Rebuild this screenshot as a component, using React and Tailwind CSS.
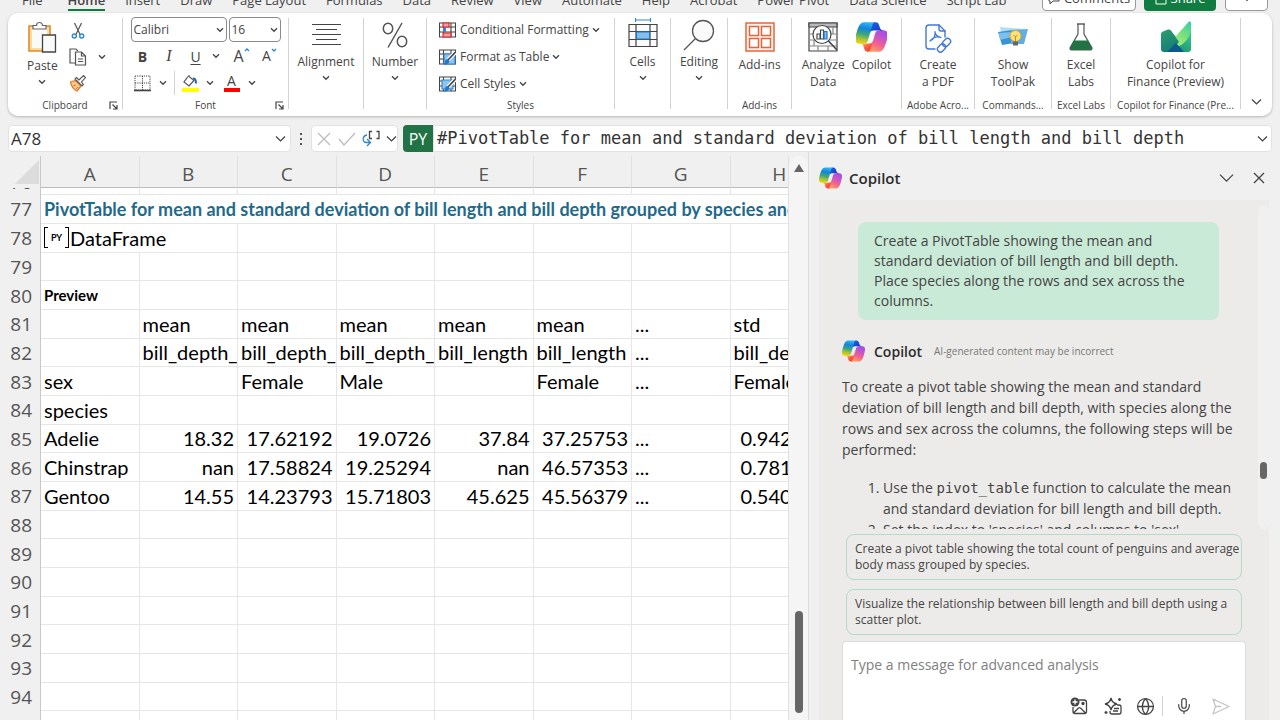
import React, { useId, useState } from 'react'
import { Mic, Globe } from 'lucide-react'

const tabs = ['Insert', 'Draw', 'Page Layout', 'Formulas', 'Data', 'Review', 'View', 'Automate', 'Help', 'Acrobat', 'Power Pivot', 'Data Science', 'Script Lab']

const columns = ['A', 'B', 'C', 'D', 'E', 'F', 'G', 'H']

const rows = [
  { id: 77, title: 'PivotTable for mean and standard deviation of bill length and bill depth grouped by species and sex' },
  { id: 78, py: 'DataFrame' },
  { id: 79 },
  { id: 80, preview: true, cells: ['Preview'] },
  { id: 81, cells: ['', 'mean', 'mean', 'mean', 'mean', 'mean', '...', 'std'] },
  { id: 82, cells: ['', 'bill_depth_', 'bill_depth_', 'bill_depth_', 'bill_length', 'bill_length', '...', 'bill_depth_'] },
  { id: 83, cells: ['sex', '', 'Female', 'Male', '', 'Female', '...', 'Female'] },
  { id: 84, cells: ['species'] },
  { id: 85, numeric: true, cells: ['Adelie', '18.32', '17.62192', '19.0726', '37.84', '37.25753', '...', '0.942993'] },
  { id: 86, numeric: true, cells: ['Chinstrap', 'nan', '17.58824', '19.25294', 'nan', '46.57353', '...', '0.781128'] },
  { id: 87, numeric: true, cells: ['Gentoo', '14.55', '14.23793', '15.71803', '45.625', '45.56379', '...', '0.540249'] },
  { id: 88 }, { id: 89 }, { id: 90 }, { id: 91 }, { id: 92 }, { id: 93 }, { id: 94 }, { id: 95 },
]

const Chevron = ({ className = 'w-2' }) => (
  <svg viewBox="0 0 10 6" className={`${className} shrink-0 overflow-visible`} fill="none" stroke="#444" strokeWidth="1.3">
    <path d="M0 .5l5 5 5-5" vectorEffect="non-scaling-stroke" />
  </svg>
)

const CopilotLogo = ({ className }) => {
  const id = useId()
  return (
    <svg viewBox="3 3 42 42" className={className}>
      <defs>
        <linearGradient id={`${id}a`} x1="38" y1="17" x2="30" y2="6" gradientUnits="userSpaceOnUse">
          <stop offset="0" stopColor="#1036c6" /><stop offset="1" stopColor="#1a56dc" />
        </linearGradient>
        <linearGradient id={`${id}b`} x1="12" y1="33" x2="20" y2="43" gradientUnits="userSpaceOnUse">
          <stop offset="0" stopColor="#ffb657" /><stop offset="0.5" stopColor="#ff5f3d" /><stop offset="1" stopColor="#e8483c" />
        </linearGradient>
        <linearGradient id={`${id}c`} x1="18" y1="4" x2="12" y2="33" gradientUnits="userSpaceOnUse">
          <stop offset="0" stopColor="#2eb8f5" /><stop offset="0.3" stopColor="#1583d8" /><stop offset="0.58" stopColor="#3fa878" /><stop offset="0.8" stopColor="#a6c43c" /><stop offset="1" stopColor="#f4d300" />
        </linearGradient>
        <linearGradient id={`${id}d`} x1="39" y1="15" x2="25" y2="45" gradientUnits="userSpaceOnUse">
          <stop offset="0" stopColor="#a34be8" /><stop offset="0.3" stopColor="#c455c9" /><stop offset="0.6" stopColor="#f4608f" /><stop offset="1" stopColor="#ffa95c" />
        </linearGradient>
      </defs>
      <path fill={`url(#${id}a)`} d="M34.1 7.3A4.6 4.6 0 0 0 29.7 4h-1.4a4.6 4.6 0 0 0-4.5 3.8l-2.3 12.6.6-2a4.6 4.6 0 0 1 4.4-3.3h7.9l3.3 1.3 3.1-1.3h-.9a4.6 4.6 0 0 1-4.4-3.3z" />
      <path fill={`url(#${id}b)`} d="M14.3 40.7A4.6 4.6 0 0 0 18.8 44h2.8a4.6 4.6 0 0 0 4.7-4.5l.3-12.2-.7 2.3a4.6 4.6 0 0 1-4.4 3.3h-7.9l-2.9-1.5-3 1.5h.9a4.6 4.6 0 0 1 4.4 3.3z" />
      <path fill={`url(#${id}c)`} d="M29.5 4h-16C8.9 4 6.1 10 4.3 16.1 2.1 23.3-.7 32.9 7.5 32.9h6.9a4.6 4.6 0 0 0 4.5-3.4l6.1-21C25.7 6 27 4 29.5 4z" />
      <path fill={`url(#${id}d)`} d="M18.5 44h16c4.6 0 7.4-6 9.2-12.1 2.2-7.2 5-16.8-3.2-16.8h-6.9a4.6 4.6 0 0 0-4.5 3.4l-6.1 21C22.3 42 21 44 18.5 44z" />
    </svg>
  )
}

const PasteIcon = () => (
  <svg viewBox="0 0 30 32" className="h-8 w-[30px]" fill="none">
    <path d="M2 5h21v25H2z" fill="#fbdc9c" stroke="#e08a2c" strokeWidth="1.6" />
    <path d="M5 8h15v19H5z" fill="#fafafa" />
    <path d="M6 8V4.500h3.500a3 3 0 0 1 6 0H19V8z" fill="#fff" stroke="#666" strokeWidth="1.2" />
    <path d="M15.500 14h13v17h-13z" fill="#fafafa" stroke="#444" strokeWidth="1.3" />
  </svg>
)

const CutIcon = () => (
  <svg viewBox="0 0 16 18" className="h-[18px] w-4" fill="none">
    <path d="M4.500 1l5.800 12M11.500 1L5.700 13" stroke="#555" strokeWidth="1.2" />
    <circle cx="4.300" cy="14" r="2" stroke="#2b88d8" strokeWidth="1.4" />
    <circle cx="11.700" cy="14" r="2" stroke="#2b88d8" strokeWidth="1.4" />
  </svg>
)

const CopyIcon = () => (
  <svg viewBox="0 0 18 18" className="h-[18px] w-[18px]" fill="none" stroke="#555" strokeWidth="1.2">
    <path d="M6 15H1V1h6l2 2" />
    <path d="M6.500 4h6l4 4v9h-10zM12.500 4v4h4M9 11h5M9 13.500h5" fill="#fafafa" />
  </svg>
)

const PainterIcon = () => (
  <svg viewBox="0 0 18 18" className="h-[18px] w-[18px]">
    <path d="M1.500 8l5-1.500 5.500 5.500-4 5C5 16 2 12 1.500 8z" fill="#fbc98a" stroke="#e0782c" strokeWidth="1.3" />
    <path d="M4 12l3-1M7 15l2-2" stroke="#e0782c" />
    <path d="M6 5l7 7 1.500-1.500-2-2.500 4-4.500L14.500 1.500 10 6 7.500 3.500z" fill="#fafafa" stroke="#555" strokeWidth="1.1" />
  </svg>
)

const BordersIcon = () => (
  <svg viewBox="0 0 17 17" className="h-[17px] w-[17px]" fill="none" stroke="#444">
    <path d="M1 1h15v14H1zM8.500 1v14M1 8h15" strokeDasharray="1.2 1" />
    <path d="M0 15.500h17" strokeWidth="1.6" />
  </svg>
)

const FillIcon = () => (
  <svg viewBox="0 0 18 18" className="h-[18px] w-[18px]" fill="none">
    <path d="M7 2.500L3 8l5 4 5-5.500-5-4V1" stroke="#555" strokeWidth="1.2" />
    <path d="M12 4.500c2-.5 3 1.500 3 5" stroke="#2166b0" strokeWidth="2" />
    <path d="M1 14h17v4H1z" fill="#ff0" />
  </svg>
)

const Launcher = () => (
  <svg viewBox="0 0 9 9" className="h-[9px] w-[9px]" fill="none" stroke="#444" strokeWidth="1.2">
    <path d="M1 8V1h7M3.500 3.500L8 8M8 4v4H4" />
  </svg>
)

const AlignmentIcon = () => (
  <svg viewBox="0 0 30 32" className="h-8 w-[30px]" stroke="#444" strokeWidth="1.2">
    <path d="M1 3.500h29M5 8.500h21M1 13.500h29M5 18.500h21M1 23.500h29" />
  </svg>
)

const PercentIcon = () => (
  <svg viewBox="0 0 28 32" className="h-8 w-7" fill="none" stroke="#555" strokeWidth="1.5">
    <ellipse cx="7" cy="7.500" rx="4.700" ry="5.300" />
    <ellipse cx="21" cy="20.500" rx="4.700" ry="5.300" />
    <path d="M21 2L7 26.500" />
  </svg>
)

const TableGlyph = ({ kind }) => (
  <svg viewBox="0 0 17 16" className="h-4 w-[17px]" fill="none" strokeWidth="1.1">
    <path d="M.5 1h16v14H.5zM.5 5h16M.5 10h16M4.500 1v14M12 1v14" stroke="#444" fill="#fff" />
    {kind === 'conditional' ? (
      <>
        <path d="M4 1h6v4H4zM4 11h8v4H4z" fill="#f79a9a" stroke="#d8262c" />
        <path d="M4 6h3v4H4z" fill="#2b88d8" />
      </>
    ) : (
      <>
        <path d={kind === 'format' ? 'M5 5h11v10H5z' : 'M3 4h11v9H3z'} fill="#8cc4ee" stroke="#2b88d8" />
        <path d="M16.500 3L9 11" stroke="#fff" strokeWidth="4" />
        <path d="M16.500 3L9 11" stroke="#444" strokeWidth="1.6" />
        <path d="M9 10c-2 0-3 1-3 3s-1 2-2 2c3 1 6 0 6.500-3z" fill="#1f78c8" />
      </>
    )}
  </svg>
)

const CellsIcon = () => (
  <svg viewBox="0 0 30 32" className="h-8 w-[30px] overflow-visible" fill="none">
    <path d="M7 -1h16M7.500 -3v4M22.500 -3v4" stroke="#2b88d8" strokeWidth="1.1" />
    <path d="M1 3.500h28v22H1zM1 10.500h28M1 18.500h28M8 3.500v22M22 3.500v22" stroke="#444" strokeWidth="1.2" fill="#fafafa" />
    <path d="M8.500 11h13v7h-13z" fill="#83beec" stroke="#1f78c8" />
  </svg>
)

const EditingIcon = () => (
  <svg viewBox="0 0 30 32" className="h-8 w-[30px] overflow-visible" fill="none" stroke="#555" strokeWidth="1.3">
    <circle cx="19" cy="10" r="10.500" fill="#fafafa" />
    <path d="M11.500 17.500L0 29" />
  </svg>
)

const AddinsIcon = () => (
  <svg viewBox="0 0 30 32" className="h-8 w-[30px]" fill="#fff" stroke="#e8653a" strokeWidth="1.5">
    <path d="M1 2h28v28H1z" fill="#fdf3ef" />
    <path d="M4.500 5.500h9v9h-9zM16.500 5.500h9v9h-9zM4.500 17.500h9v9h-9zM16.500 17.500h9v9h-9z" />
  </svg>
)

const AnalyzeIcon = () => (
  <svg viewBox="0 0 30 32" className="h-8 w-[30px]" fill="none" stroke="#444" strokeWidth="1.2">
    <path d="M1 2h28v28H1z" fill="#fafafa" />
    <path d="M1 2h28v4H1z" fill="#bbb" />
    <path d="M1 13h28M1 19h28M1 25h28M8 13v6M6 19v6M20 25v5M10 25v5M25 6v7" stroke="#888" />
    <circle cx="14" cy="13.500" r="9" fill="#fff" />
    <path d="M20.500 20l8.500 9" strokeWidth="1.6" />
    <path d="M9 13h3v5H9zM12.500 9h3v9h-3z" />
    <path d="M16 10.500h3V18h-3z" fill="#83beec" stroke="#1f78c8" />
  </svg>
)

const PdfIcon = () => (
  <svg viewBox="0 0 28 32" className="h-8 w-7" fill="none" stroke="#4078d8" strokeWidth="1.4" strokeLinejoin="round" strokeLinecap="round">
    <path d="M11 28H5a3 3 0 0 1-3-3V7a3 3 0 0 1 3-3h10l6 6v6" />
    <path d="M15 4v4a2 2 0 0 0 2 2h4" />
    <path d="M6 20c4-2 5.500-6 5-9.500M6 20c3-3.500 7-5 11-3.500M11 10.500c0 3 2 5 6 6" strokeWidth="1.2" />
    <rect x="18" y="18.500" width="9" height="6" rx="3" transform="rotate(-45 22.5 21.5)" />
    <rect x="13" y="24" width="9" height="6" rx="3" transform="rotate(-45 17.5 27)" />
  </svg>
)

const ToolPakIcon = () => (
  <svg viewBox="0 0 32 32" className="h-8 w-8">
    <path d="M3 6l24 2-2 14H6z" fill="#b4dcf5" />
    <path d="M1 11l14-2 2 13-12 2z" fill="#3a94d4" />
    <path d="M14 9l17-1-4 15H14z" fill="#62aee2" />
    <path d="M2 12l13-1v5L3 19z" fill="#7cc0ec" />
    <circle cx="18.500" cy="15" r="5.500" fill="#fbe37a" stroke="#d9a92c" />
    <path d="M16.500 14l2 2 2-2M18.500 16v5" stroke="#c08a18" fill="none" />
    <path d="M16 20.500h5v4h-5z" fill="#666" />
  </svg>
)

const FlaskIcon = () => (
  <svg viewBox="0 0 24 32" className="h-8 w-6">
    <path d="M9 3v10L1 27q0 2 2 2h18q2 0 2-2L15 13V3" fill="#fff" stroke="#555" strokeWidth="1.2" />
    <path d="M8 3h8" stroke="#555" strokeWidth="1.4" />
    <path d="M5 19.500h14l4 7.500q0 2-2 2H3q-2 0-2-2z" fill="#217346" />
  </svg>
)

const FinanceIcon = () => {
  const id = useId()
  return (
    <svg viewBox="0 0 32 32" className="h-8 w-8">
      <defs>
        <linearGradient id={`${id}l`} x1="0" y1="8" x2="14" y2="32" gradientUnits="userSpaceOnUse">
          <stop offset="0" stopColor="#2fa06c" /><stop offset="1" stopColor="#0f7a78" />
        </linearGradient>
        <linearGradient id={`${id}m`} x1="31" y1="0" x2="10" y2="24" gradientUnits="userSpaceOnUse">
          <stop offset="0" stopColor="#2ad0a8" /><stop offset="0.5" stopColor="#7de07a" /><stop offset="1" stopColor="#b6f08c" />
        </linearGradient>
        <linearGradient id={`${id}r`} x1="31" y1="8" x2="18" y2="32" gradientUnits="userSpaceOnUse">
          <stop offset="0" stopColor="#3fd08e" /><stop offset="1" stopColor="#17956f" />
        </linearGradient>
      </defs>
      <path d="M31 4v24a3 3 0 0 1-3 3H9l6-6z" fill={`url(#${id}r)`} />
      <path d="M31 1.500q0-1.500-2-1L16 15 9 9c1 9 4 16 9 16 6 0 13-11 13-15z" fill={`url(#${id}m)`} />
      <path d="M1 13q0-2 2-2.500l5-2q1.500-.5 3 1L19 21 9 31H4a3 3 0 0 1-3-3z" fill={`url(#${id}l)`} />
      <path d="M7 31l9-9q3 3 8 9z" fill="#0c5a8c" />
    </svg>
  )
}

const Divider = () => <span className="mt-[5px] h-[91px] w-px shrink-0 bg-[#d2d2d2]" />

const Group = ({ label, width, launcher, children }) => (
  <section className={`${width} flex shrink-0 flex-col justify-between pt-[8px] pb-[3px]`} aria-label={label || undefined}>
    <div className="flex justify-center">{children}</div>
    {label && (
      <div className="flex h-4 items-center justify-center text-[10px] leading-4">
        {launcher && <span className="w-[18px]" />}
        <span className={launcher ? 'flex-1 text-center' : 'truncate'}>{label}</span>
        {launcher && <button aria-label={`${label} settings`} className="flex w-[18px] justify-center"><Launcher /></button>}
      </div>
    )}
  </section>
)

const BigButton = ({ icon, lines }) => (
  <button className="flex flex-col items-center text-[12px] leading-[17px] whitespace-nowrap">
    {icon}
    <span className="mt-[3px]">{lines[0]}</span>
    {lines[1] && <span>{lines[1]}</span>}
  </button>
)

const MenuButton = ({ icon, label }) => (
  <button className="flex flex-col items-center text-[12px] leading-[17px] whitespace-nowrap">
    {icon}
    <span>{label}</span>
    <Chevron className="mt-[6px] w-[6px]" />
  </button>
)

const IconButton = ({ label, width = 'w-6', children }) => (
  <button aria-label={label} className={`${width} flex h-6 shrink-0 items-center justify-center`}>{children}</button>
)

const FontSelect = ({ label, width, value }) => (
  <label className={`${width} relative flex h-[25px] items-center`}>
    <span className="sr-only">{label}</span>
    <select className="h-full w-full appearance-none rounded-[4px] border border-[#8a8a8a] bg-white px-[2px] text-[12px] text-[#444]">
      <option>{value}</option>
    </select>
    <Chevron className="pointer-events-none absolute right-1 w-[6px]" />
  </label>
)

const TopBar = () => (
  <header className="flex h-[13px] shrink-0 items-end justify-between overflow-hidden pr-3 pl-[22px] text-[13px]">
    <nav className="flex gap-5 pb-[2px] leading-[18px] whitespace-nowrap">
      <a href="#file" className="mr-[5px]">File</a>
      <a href="#home" className="border-b-2 border-[#107c41] font-semibold">Home</a>
      {tabs.map((tab) => <a key={tab} href={`#${tab}`}>{tab}</a>)}
    </nav>
    <div className="flex gap-2 pb-[2px]">
      <button className="flex h-6 w-[94px] items-center justify-center gap-1 rounded-[4px] border border-[#999] bg-white">
        <svg viewBox="0 0 12 12" className="w-3" fill="none" stroke="#444"><path d="M1 1h10v7H5l-3 3V8H1z" /></svg>
        Comments
      </button>
      <button className="flex h-6 w-[72px] items-center justify-center gap-1 rounded-[4px] bg-[#107c41] text-white">
        <svg viewBox="0 0 12 12" className="w-3" fill="none" stroke="#fff"><path d="M4 3H1v8h10V6M4 7c0-3 3-4 6-4" /></svg>
        Share
      </button>
      <button aria-label="More" className="ml-[1px] flex h-6 w-[43px] items-center justify-center rounded-[4px] border border-[#999] bg-white"><Chevron className="w-[6px]" /></button>
    </div>
  </header>
)

const Ribbon = () => (
  <div className="mx-2 flex h-[103px] shrink-0 rounded-[10px] bg-white text-[#444] shadow-[0_1px_3px_rgba(0,0,0,0.25)]">
    <Group label="Clipboard" width="w-[114px]" launcher>
      <div className="flex w-full gap-2 pl-[19px]">
        <button className="flex flex-col items-center text-[12px] leading-[17px]">
          <PasteIcon />
          <span className="mt-1">Paste</span>
          <Chevron className="mt-[6px] w-[6px]" />
        </button>
        <div className="flex flex-col">
          <div className="-mt-[2px]"><IconButton label="Cut"><CutIcon /></IconButton></div>
          <div className="mt-[2px] flex">
            <IconButton label="Copy"><CopyIcon /></IconButton>
            <IconButton label="Copy options"><Chevron className="w-[6px]" /></IconButton>
          </div>
          <div className="mt-[2px]"><IconButton label="Format Painter"><PainterIcon /></IconButton></div>
        </div>
      </div>
    </Group>
    <Divider />
    <Group label="Font" width="w-[165px]" launcher>
      <div className="-mt-1 w-[150px]">
        <div className="flex gap-[2px]">
          <FontSelect label="Font name" width="w-[96px]" value="Calibri" />
          <FontSelect label="Font size" width="w-[52px]" value="16" />
        </div>
        <div className="mt-[2px] flex items-center text-[14px]">
          <IconButton label="Bold"><b>B</b></IconButton>
          <IconButton label="Italic" width="w-[29px]"><i className="font-['Liberation_Serif',serif] text-[16px]">I</i></IconButton>
          <IconButton label="Underline"><u className="underline-offset-2">U</u></IconButton>
          <IconButton label="Underline options" width="w-4"><Chevron className="w-[6px]" /></IconButton>
          <span className="mx-[2px] h-6 w-px bg-[#d2d2d2]" />
          <IconButton label="Grow font" width="w-7">
            <span className="text-[16px] leading-6">A</span>
            <svg viewBox="0 0 6 4" className="mb-3 w-[6px]" fill="none" stroke="#2b88d8" strokeWidth="1.3"><path d="M1 3l2-2 2 2" /></svg>
          </IconButton>
          <IconButton label="Shrink font" width="w-7">
            <span className="text-[14px] leading-6">A</span>
            <svg viewBox="0 0 6 4" className="mb-3 w-[6px]" fill="none" stroke="#2b88d8" strokeWidth="1.3"><path d="M1 1l2 2 2-2" /></svg>
          </IconButton>
        </div>
        <div className="mt-[3px] flex items-center">
          <IconButton label="Borders"><BordersIcon /></IconButton>
          <IconButton label="Border options" width="w-4"><Chevron className="w-[6px]" /></IconButton>
          <span className="mx-[3px] h-6 w-px bg-[#d2d2d2]" />
          <IconButton label="Fill color"><FillIcon /></IconButton>
          <IconButton label="Fill options" width="w-4"><Chevron className="w-[6px]" /></IconButton>
          <IconButton label="Font color" width="w-7">
            <span className="w-4 border-b-4 border-[#f00] text-center text-[14px] leading-[14px]">A</span>
          </IconButton>
          <IconButton label="Font color options" width="w-3"><Chevron className="w-[6px]" /></IconButton>
        </div>
      </div>
    </Group>
    <Divider />
    <Group width="w-[74px]"><MenuButton icon={<AlignmentIcon />} label="Alignment" /></Group>
    <Divider />
    <Group width="w-[62px]"><MenuButton icon={<PercentIcon />} label="Number" /></Group>
    <Divider />
    <Group label="Styles" width="w-[187px]">
      <div className="flex w-full flex-col gap-[11px] pt-[1px] pl-3">
        {[['conditional', 'Conditional Formatting'], ['format', 'Format as Table'], ['styles', 'Cell Styles']].map(([kind, label]) => (
          <button key={kind} className="flex h-4 items-center gap-1 text-[12px] leading-4 whitespace-nowrap">
            <TableGlyph kind={kind} />{label}<Chevron className="w-[6px]" />
          </button>
        ))}
      </div>
    </Group>
    <Divider />
    <Group width="w-[55px]"><MenuButton icon={<CellsIcon />} label="Cells" /></Group>
    <Divider />
    <Group width="w-[56px]"><MenuButton icon={<EditingIcon />} label="Editing" /></Group>
    <Divider />
    <Group label="Add-ins" width="w-[63px]"><BigButton icon={<AddinsIcon />} lines={['Add-ins']} /></Group>
    <Divider />
    <Group width="w-[109px]">
      <div className="flex gap-[7px]">
        <BigButton icon={<AnalyzeIcon />} lines={['Analyze', 'Data']} />
        <BigButton icon={<CopilotLogo className="h-8 w-[31px]" />} lines={['Copilot']} />
      </div>
    </Group>
    <Divider />
    <Group label="Adobe Acro..." width="w-[72px]"><BigButton icon={<PdfIcon />} lines={['Create', 'a PDF']} /></Group>
    <Divider />
    <Group label="Commands..." width="w-[76px]"><BigButton icon={<ToolPakIcon />} lines={['Show', 'ToolPak']} /></Group>
    <Divider />
    <Group label="Excel Labs" width="w-[58px]"><BigButton icon={<FlaskIcon />} lines={['Excel', 'Labs']} /></Group>
    <Divider />
    <Group label="Copilot for Finance (Pre..." width="w-[129px]"><BigButton icon={<FinanceIcon />} lines={['Copilot for', 'Finance (Preview)']} /></Group>
    <Divider />
    <button aria-label="Collapse ribbon" className="mb-3 flex flex-1 items-end justify-center"><Chevron className="w-[9px]" /></button>
  </div>
)

const FormulaBar = () => (
  <div className="mx-2 mt-[9px] flex h-[27px] shrink-0 items-stretch">
    <label className="flex w-[283px] shrink-0 items-center rounded-[4px] border border-[#e2e2e2] bg-white pr-[5px] pl-[2px]">
      <span className="sr-only">Name box</span>
      <input defaultValue="A78" className="min-w-0 flex-1 text-[17px] text-[#333] outline-none" />
      <Chevron className="w-[9px]" />
    </label>
    <span className="flex w-5 shrink-0 flex-col items-center justify-center gap-[3px]">
      {[0, 1, 2].map((dot) => <i key={dot} className="h-[2px] w-[2px] bg-[#555]" />)}
    </span>
    <div className="flex w-[87px] shrink-0 items-center justify-between rounded-[4px] border border-[#e2e2e2] bg-white pr-[1px] pl-[5px]">
      <button aria-label="Cancel"><svg viewBox="0 0 14 14" className="w-[14px]" stroke="#bbb" strokeWidth="1.2"><path d="M1 1l12 12M13 1L1 13" /></svg></button>
      <button aria-label="Enter"><svg viewBox="0 0 18 14" className="w-[18px]" fill="none" stroke="#bbb" strokeWidth="1.2"><path d="M1 7l5 6L17 1" /></svg></button>
      <button aria-label="Output type">
        <svg viewBox="0 0 18 18" className="w-[18px]" fill="none" strokeWidth="1.3">
          <path d="M10 1.500H7.500v7H10M14.500 1.500H17v7h-2.500" stroke="#444" />
          <path d="M5 5C0 6 0 12.500 4.500 12.500h4M5 9l3.500 3.500L5 16" stroke="#2b88d8" />
        </svg>
      </button>
      <button aria-label="Output options"><Chevron className="w-[9px]" /></button>
    </div>
    <span className="ml-[5px] flex w-[30px] shrink-0 items-center justify-center rounded-l-[4px] bg-[#217346] text-[16px] text-white">PY</span>
    <label className="flex flex-1 items-center rounded-r-[4px] border border-[#e2e2e2] bg-white pr-1 pl-[3px]">
      <span className="sr-only">Formula</span>
      <input
        defaultValue="#PivotTable for mean and standard deviation of bill length and bill depth"
        className="min-w-0 flex-1 font-['DejaVu_Sans_Mono',monospace] text-[17px] text-[#333] outline-none"
      />
      <Chevron className="w-[9px]" />
    </label>
  </div>
)

const Row = ({ row }) => {
  const cell = 'overflow-hidden border-r border-b border-[#e6e6e6] p-0 px-[3px] whitespace-nowrap'
  return (
    <tr className="h-7">
      <th scope="row" className="border-r border-[#c8c8c8] bg-[#f0f0f0] p-0 pr-[8px] text-right align-middle font-['Open_Sans',sans-serif] text-[19px] leading-6 font-normal text-[#555]">{row.id}</th>
      {row.title && <td colSpan={8} className={`${cell} text-[18px] font-bold text-[#1f6a8c]`}>{row.title}</td>}
      {row.py && (
        <>
          <td colSpan={2} className={cell}>
            <span className="flex items-center">
              <span className="flex h-[21px] w-[25px] items-stretch justify-between">
                <i className="w-1 border-y border-l border-black" />
                <b className="self-center text-[9px] leading-3">PY</b>
                <i className="w-1 border-y border-r border-black" />
              </span>
              <span className="ml-[1px]">{row.py}</span>
            </span>
          </td>
          {columns.slice(2).map((col) => <td key={col} className={cell} />)}
        </>
      )}
      {!row.title && !row.py && columns.map((col, i) => (
        <td key={col} className={`${cell} ${row.preview ? 'text-[15px] font-bold' : ''} ${row.numeric && i > 0 && i < 6 ? 'text-right' : ''} ${row.numeric && i === 7 ? 'pl-[10px]' : ''}`}>{row.cells?.[i]}</td>
      ))}
    </tr>
  )
}

const Sheet = () => (
  <main className="flex min-w-0 flex-1 pt-1">
    <div className="min-w-0 flex-1 overflow-hidden border-r border-[#e0e0e0]">
      <table className="h-[584px] w-[829px] table-fixed border-separate border-spacing-0 bg-white font-['Lato',sans-serif] text-[20px] leading-6 text-black">
        <colgroup>
          <col className="w-[41px]" />
          {columns.map((col) => <col key={col} />)}
        </colgroup>
        <thead>
          <tr className="h-8 bg-[#f0f0f0] font-['Open_Sans',sans-serif] text-[19px] text-[#555]">
            <th aria-label="Select all" className="border-r border-[#c8c8c8] p-0">
              <svg viewBox="0 0 24 24" className="mr-[1px] ml-auto w-6"><path d="M24 0v24H0z" fill="#dcdcdc" /></svg>
            </th>
            {columns.map((col) => <th key={col} scope="col" className="border-r border-b border-r-[#e0e0e0] border-b-[#bcbcbc] p-0 pt-1 font-normal">{col}</th>)}
          </tr>
        </thead>
        <tbody>
          <tr className="h-[7px]">
            <th scope="row" className="border-r border-[#c8c8c8] bg-[#f0f0f0] p-0 pr-[8px] font-['Open_Sans',sans-serif] text-[19px] leading-[26px] font-normal text-[#555]">
              <span className="flex h-[7px] items-end justify-end overflow-hidden">76</span>
            </th>
            {columns.map((col) => <td key={col} className="border-r border-b border-[#e6e6e6] p-0" />)}
          </tr>
          {rows.map((row) => <Row key={row.id} row={row} />)}
        </tbody>
      </table>
    </div>
    <div className="flex w-[19px] shrink-0 flex-col items-center justify-between rounded-t-full bg-[#f5f5f5] pt-2 pb-[7px]">
      <svg viewBox="0 0 10 8" className="w-[10px]"><path d="M5 0l5 8H0z" fill="#666" /></svg>
      <span className="h-[102px] w-2 rounded-full bg-[#666]" />
    </div>
  </main>
)

const CopilotPane = () => {
  const [message, setMessage] = useState('')
  return (
    <aside className="flex w-[472px] shrink-0 flex-col border-l border-[#dcdcdc] pr-[11px] pl-[10px] text-[#444]">
      <div className="flex h-12 shrink-0 items-center pt-1 pr-1">
        <CopilotLogo className="h-[22px] w-[23px]" />
        <h2 className="ml-[7px] flex-1 text-[15px] font-semibold text-[#2b2b2b]">Copilot</h2>
        <button aria-label="Pane options"><Chevron className="w-[13px]" /></button>
        <button aria-label="Close" className="ml-5">
          <svg viewBox="0 0 12 12" className="w-3" stroke="#444" strokeWidth="1.3"><path d="M1 1l10 10M11 1L1 11" /></svg>
        </button>
      </div>
      <div className="flex min-h-0 flex-1 flex-col bg-[#ecebe9]">
        <div className="flex h-[329px] shrink-0">
          <div className="min-w-0 flex-1 overflow-hidden pt-[22px] pl-[23px] text-[14px] leading-[21px]">
            <p className="mr-[39px] ml-4 rounded-lg bg-[#caead8] px-4 py-[9px] leading-5">
              Create a PivotTable showing the mean and standard deviation of bill length and bill depth. Place species along the rows and sex across the columns.
            </p>
            <div className="mt-[19px] flex h-6 items-center">
              <CopilotLogo className="h-[22px] w-[23px]" />
              <strong className="ml-[9px] text-[14px] font-semibold text-[#2b2b2b]">Copilot</strong>
              <small className="ml-3 text-[10px] text-[#777]">AI-generated content may be incorrect</small>
            </div>
            <p className="mt-[13px] mr-3">
              To create a pivot table showing the mean and standard deviation of bill length and bill depth, with species along the rows and sex across the columns, the following steps will be performed:
            </p>
            <ol className="mt-[17px] mr-6 list-decimal pl-[41px]">
              <li>Use the <code className="font-['DejaVu_Sans_Mono',monospace] text-[14px] leading-5">pivot_table</code> function to calculate the mean and standard deviation for bill length and bill depth.</li>
              <li>Set the index to 'species' and columns to 'sex'.</li>
            </ol>
          </div>
          <div className="mt-[5px] flex w-[11px] flex-col items-center rounded-full bg-[#f0f0f0]">
            <span className="mt-[257px] h-[17px] w-[7px] rounded-full bg-[#666]" />
          </div>
        </div>
        <div className="mx-[27px] flex flex-col gap-[9px] pt-[5px] text-[12px] leading-4">
          <button className="rounded-lg border border-[#b2dcc5] py-[6px] pl-2 text-left">Create a pivot table showing the total count of penguins and average body mass grouped by species.</button>
          <button className="rounded-lg border border-[#b2dcc5] py-[6px] pl-2 text-left">Visualize the relationship between bill length and bill depth using a scatter plot.</button>
        </div>
        <div className="mx-[23px] mt-[6px] flex flex-1 flex-col justify-between rounded-t-[4px] border border-b-0 border-[#dcdcdc] bg-white pt-3 pb-1">
          <input
            aria-label="Message"
            value={message}
            onChange={(e) => setMessage(e.target.value)}
            placeholder="Type a message for advanced analysis"
            className="px-2 text-[14px] leading-[21px] outline-none placeholder:text-[#808080]"
          />
          <div className="flex items-center justify-end pr-[15px]">
            <button aria-label="Add image">
              <svg viewBox="0 0 18 18" className="w-[18px]" fill="none" stroke="#444" strokeWidth="1.3">
                <path d="M9 3h5a2.500 2.500 0 0 1 2.500 2.500v9a2 2 0 0 1-2 2H5a2 2 0 0 1-2-2V10M3.500 16l5-5q1-.7 2 0l5 5" />
                <circle cx="13" cy="6.500" r="1" fill="#444" />
                <circle cx="5" cy="5" r="4.500" fill="#444" stroke="none" />
                <path d="M5 2.500v5M2.500 5h5" stroke="#fff" />
              </svg>
            </button>
            <button aria-label="Prompts" className="ml-4">
              <svg viewBox="0 0 18 18" className="w-[18px]" fill="none" stroke="#444" strokeWidth="1.3">
                <path d="M7 1q1 5 6 6-5 1-6 6-1-5-6-6 5-1 6-6z" />
                <path d="M13 8h2a2 2 0 0 1 2 2v5a2 2 0 0 1-2 2H8a2 2 0 0 1-2-2v-1M10 11.500h5M9 14h5" />
                <path d="M15.500 1v3M14 2.500h3M2 14v3M.5 15.500h3" />
              </svg>
            </button>
            <button aria-label="Web" className="ml-[14px]"><Globe size={19} strokeWidth={1.6} /></button>
            <span className="mx-[7px] h-5 w-px bg-[#d2d2d2]" />
            <button aria-label="Dictate" className="ml-[5px]"><Mic size={18} strokeWidth={1.6} /></button>
            <button aria-label="Send" className="ml-[18px]">
              <svg viewBox="0 0 19 19" className="w-[19px]" fill="none" stroke="#c4c4c4" strokeWidth="1.3" strokeLinejoin="round"><path d="M2 2l16 7.500L2 17l2.500-7.500zM4.500 9.500H10" /></svg>
            </button>
          </div>
        </div>
      </div>
    </aside>
  )
}

const App = () => (
  <div className="flex h-screen flex-col overflow-hidden bg-[#f0f0f0] font-['Open_Sans',sans-serif] text-[#444]">
    <TopBar />
    <Ribbon />
    <FormulaBar />
    <div className="flex min-h-0 flex-1">
      <Sheet />
      <CopilotPane />
    </div>
  </div>
)

export default App
